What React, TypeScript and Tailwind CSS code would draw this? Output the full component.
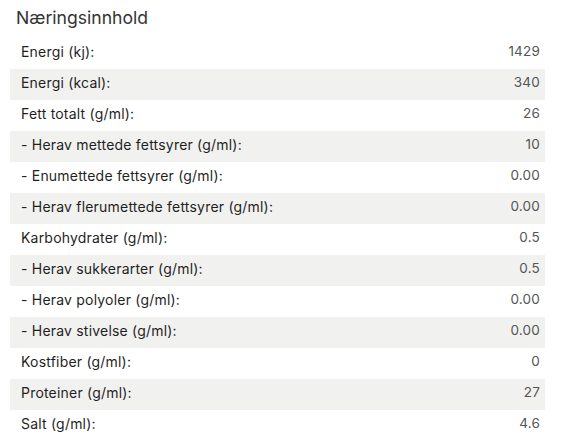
import React from "react";

const rows: [string, string][] = [
  ["Energi (kj):", "1429"],
  ["Energi (kcal):", "340"],
  ["Fett totalt (g/ml):", "26"],
  ["- Herav mettede fettsyrer (g/ml):", "10"],
  ["- Enumettede fettsyrer (g/ml):", "0.00"],
  ["- Herav flerumettede fettsyrer (g/ml):", "0.00"],
  ["Karbohydrater (g/ml):", "0.5"],
  ["- Herav sukkerarter (g/ml):", "0.5"],
  ["- Herav polyoler (g/ml):", "0.00"],
  ["- Herav stivelse (g/ml):", "0.00"],
  ["Kostfiber (g/ml):", "0"],
  ["Proteiner (g/ml):", "27"],
  ["Salt (g/ml):", "4.6"],
];

export default function App() {
  return (
    <div className="w-[564px] h-[448px] bg-white font-['Inter',sans-serif] overflow-hidden">
      <div className="pl-[10px] pr-[19px]">
        <h2 className="pl-[6px] pt-[7px] h-[38px] text-[17.6px] leading-[22px] text-[#333] font-normal">
          Næringsinnhold
        </h2>
        <div className="flex flex-col">
          {rows.map(([label, value], i) => (
            <div
              key={i}
              className={`flex items-center justify-between h-[31px] pb-[4px] pl-[11px] pr-[5px] ${
                i % 2 === 1 ? "bg-[#f1f1f0]" : "bg-white"
              }`}
            >
              <span className="text-[14px] tracking-[0.2px] text-[#1f1f1f] font-normal">{label}</span>
              <span className="text-[13.5px] tracking-[0.2px] text-[#555]">{value}</span>
            </div>
          ))}
        </div>
      </div>
    </div>
  );
}
